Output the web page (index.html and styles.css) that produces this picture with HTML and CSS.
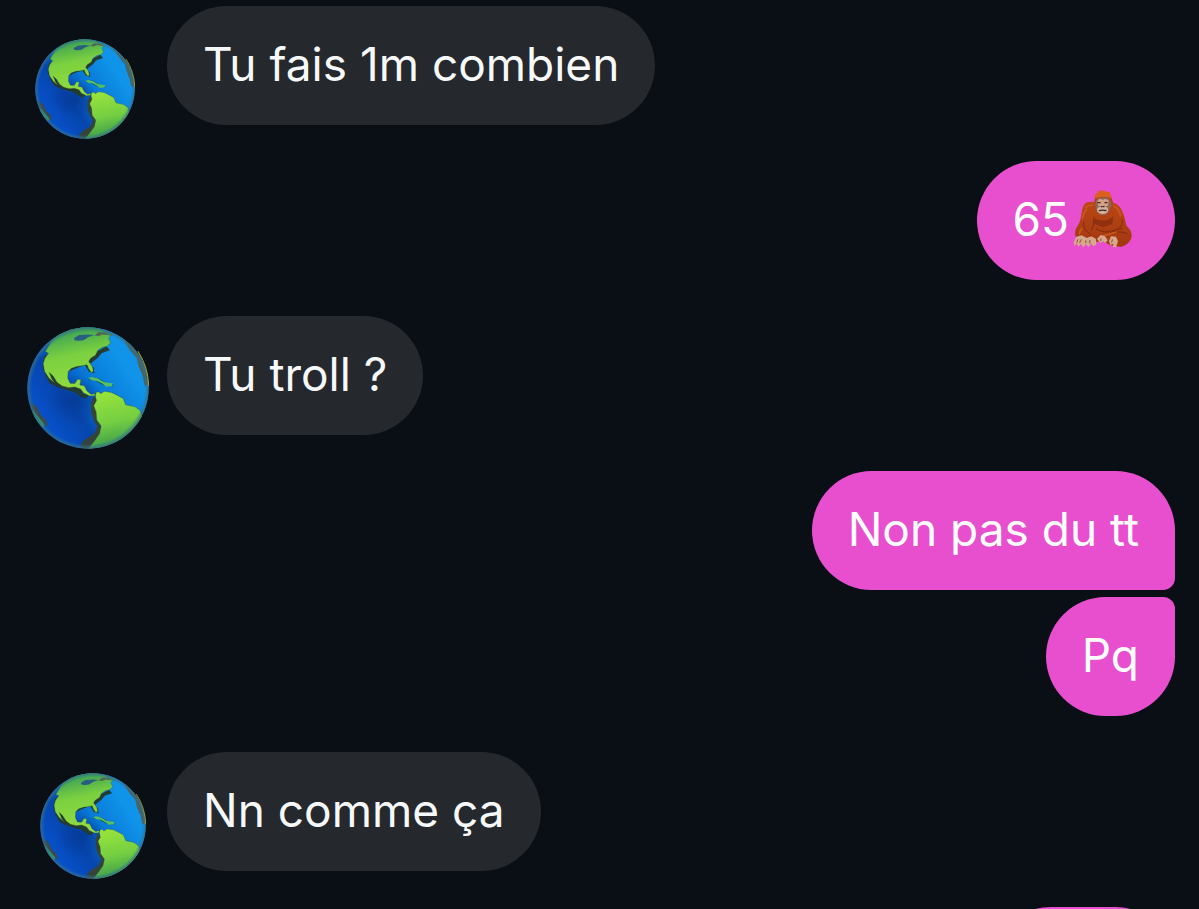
FILE: index.html
```
<!DOCTYPE html>
<html lang="fr">
	<head>
		<title>Messages</title>
		<meta charset="utf-8"/>
		<meta name="viewport" content="width=device-width, initial-scale=1"/>
		<link rel="stylesheet" href="styles.css">
	</head>
	<body>
		<!-- shared drawings -->
		<svg class="defs" width="0" height="0" aria-hidden="true">
			<defs>
				<linearGradient id="sea" x1="0.15" y1="0.75" x2="0.8" y2="0.3">
					<stop offset="0" stop-color="#0750c8"/>
					<stop offset="0.3" stop-color="#0645ac"/>
					<stop offset="0.6" stop-color="#0878d6"/>
					<stop offset="1" stop-color="#1094ea"/>
				</linearGradient>
				<linearGradient id="north" x1="0.6" y1="1" x2="0.4" y2="0">
					<stop offset="0" stop-color="#96df3c"/>
					<stop offset="0.6" stop-color="#7bd040"/>
					<stop offset="1" stop-color="#329b55"/>
				</linearGradient>
				<linearGradient id="south" x1="0.4" y1="0" x2="0.6" y2="1">
					<stop offset="0" stop-color="#97e33b"/>
					<stop offset="0.5" stop-color="#75cf42"/>
					<stop offset="1" stop-color="#2f914c"/>
				</linearGradient>
				<radialGradient id="rim">
					<stop offset="0.92" stop-color="#2d769b" stop-opacity="0"/>
					<stop offset="1" stop-color="#396e7c" stop-opacity="0.9"/>
				</radialGradient>
				<radialGradient id="deep">
					<stop offset="0" stop-color="#053b98"/>
					<stop offset="1" stop-color="#053b98" stop-opacity="0"/>
				</radialGradient>
				<clipPath id="disc"><circle cx="219" cy="220" r="180"/></clipPath>
				<linearGradient id="fur" x1="0" y1="0" x2="0" y2="1">
					<stop offset="0" stop-color="#c04c17"/>
					<stop offset="1" stop-color="#a2370f"/>
				</linearGradient>
			</defs>
			<symbol id="globe" viewBox="38 39 362 362">
				<g clip-path="url(#disc)">
					<rect x="38" y="39" width="362" height="362" fill="url(#sea)"/>
					<ellipse cx="180" cy="255" rx="85" ry="75" fill="url(#deep)"/>
					<path d="M325 78l20 32 18 20 6 25 12 28 6 30 20-5-12-65-35-55z" fill="#4c615a"/>
					<path d="M50 262l18 15 10 22 18 18 2 18-20-8-25-34z" fill="#3c4a49"/>
					<path d="M54 286l18 20 18 22-4 10-28-25z" fill="#2d9870"/>
					<path d="M236 246l-8 18 0 30 10 26 9 14-10 22-20 12-16 12-6 25 60-10 10-140z" fill="#34443d"/>
					<path d="M88 130l-4 28 9 26 13 23 23 11 18 6 30 8 24 16 14 4 4-12-16-4-6-22-40-2-64-92zM160 172l22-10 28-10 12 20 16 4-2-16-10-12 22-18 12-14 24-8-10-12-110 60z" fill="#243b34"/>
					<path d="M92 112L112 78 150 46 200 36 250 43 290 62 280 72 286 86 276 96 262 99 248 108 242 122 227 132 221 141 232 156 235 170 229 174 221 163 216 151 202 154 186 156 169 162 160 172 159 191 166 206 180 207 188 194 198 195 195 211 208 213 216 229 228 239 241 236 238 243 225 244 206 235 197 223 180 217 162 219 142 214 127 203 115 184 104 174 112 194 121 206 104 192 90 171 86 148 91 132 102 117z" fill="url(#north)" stroke="#27402e" stroke-width="1"/>
					<path d="M178 72l15-9 26-2 19 2-18 6-14 9-16 2-11-2z" fill="#2a5d83"/>
					<path d="M238 64l13-10 20 1 22 11-16-3-15-2-12 5z" fill="#516653"/>
					<path d="M219 195l11-7 16 2 19 10 14 7 14 2-2 6-20-1-21-10-15-10z" fill="#173b38"/>
					<path d="M219 190l12-3 16 4 15 9 12 4 19 2-3 9-17 1-12-9-16-8-14-2z" fill="#54bf65"/>
					<path d="M241 243l3-11 8 0 4 5 12-7 20 3 13 6 22 12 8 19 28 6 16 12 5 20-20 42-54 41-62 15-25-6 19-23 15-21 5-23-13-18-2-24-7-18 8-15z" fill="url(#south)" stroke="#27402e" stroke-width="1"/>
					<circle cx="219" cy="220" r="181" fill="url(#rim)"/>
				</g>
				<path d="M367 111q31 47 32 103" fill="none" stroke="#a0a33b" stroke-width="3"/>
			</symbol>
			<symbol id="orangutan" viewBox="40 28 180 180">
				<path d="M82 68C64 75 68 105 60 128 49 146 41 158 50 174L70 190 132 185 150 196 184 202Q210 195 216 172 218 153 201 139C195 113 188 75 161 69L151 43 123 32 108 48 104 66z" fill="url(#fur)"/>
				<path d="M101 109q7 14 28 14t32-14l-3 24-28 10-25-10z" fill="#8f3010"/>
				<path d="M72 128q-2 19 10 27l18 18M102 120q2 20-6 30M110 148q23 14 46 6 18-5 31-8M187 120q5 16-9 26l-44 25M151 160q26-8 52 2" fill="none" stroke="#812b0c" stroke-width="3" stroke-linecap="round"/>
				<path d="M78 84q9-9 20-7M68 116q5-22 13-26M163 80q15 7 20 28M125 171q22-7 44-14M67 147q-8 8-8 16" fill="none" stroke="#cd581f" stroke-width="5" stroke-linecap="round"/>
				<path d="M106 66Q102 40 126 37q27-6 30 25l4 21q-2 22-30 27-24-3-26-24z" fill="#b3431a"/>
				<path d="M110 61q5-10 17-7 17-4 25 8l4 15-9 17q-3 12-17 12-18-1-19-15l-5-15z" fill="#8e6757"/>
				<path d="M114 62q8-8 15-1 9-7 18 2l-2 15-14 4-16-4z" fill="#d5a083"/>
				<ellipse cx="129" cy="91" rx="17" ry="12" fill="#d2b19c"/>
				<path d="M115 69h6m15 0h6M125 81h2m4 0h2M119 93q10-3 20 0" fill="none" stroke="#3a2522" stroke-width="4" stroke-linecap="round"/>
				<path d="M106 56q-5-18 17-19l-12-3q22-3 34 3l9 1-4 5 6 13q-22-9-50 0" fill="#dc601d"/>
				<path d="M42 189l8-18 16-4 15 8 15-5 13 8 1 17-10 5-5-9-8 11-9-8-8 9-6-11-8 9-5-10-6 8zM112 178l11-12 13 4 8 12-7 8-7-5-8 5zM148 184l6-14 15 1 6 14-6 18-9-1 1-10-9 4z" fill="#d8a88d"/>
				<path d="M55 179l-4 10M65 179l-5 11M78 182l1 8M91 181l-1 10M124 176l-1 8M158 179l-2 10" stroke="#875041" stroke-width="3"/>
			</symbol>
		</svg>

		<main class="chat">
			<div class="message received">
				<div class="avatar"><svg class="globe small" role="img"><use href="#globe"/></svg></div>
				<div class="bubble">Tu fais 1m combien</div>
			</div>
			<div class="message sent">
				<div class="bubble">65<svg class="emoji" role="img"><use href="#orangutan"/></svg></div>
			</div>
			<div class="message received">
				<div class="avatar"><svg class="globe large" role="img"><use href="#globe"/></svg></div>
				<div class="bubble">Tu troll ?</div>
			</div>
			<div class="message sent group">
				<div class="bubble">Non pas du tt</div>
				<div class="bubble">Pq</div>
			</div>
			<div class="message received">
				<div class="avatar"><svg class="globe medium" role="img"><use href="#globe"/></svg></div>
				<div class="bubble">Nn comme ça</div>
			</div>
			<div class="message sent">
				<div class="bubble next"></div>
			</div>
		</main>
	</body>
</html>
```

FILE: styles.css
```
* { box-sizing:border-box; }
body {
	margin:0;
	height:100vh;
	overflow:hidden;
	color:#f7f8fa;
	background:#0a0e15;
	font-family:Inter, "Liberation Sans", sans-serif;
	font-size:46px;
	line-height:56px;
}
.defs { position:absolute; }

.chat {
	display:flex;
	flex-direction:column;
	gap:36px;
	height:100%;
	overflow:hidden;
	padding:6px 24px 0 0;
}
.message {
	display:flex;
	flex:none;
}
.received { align-items:flex-end; }
.sent {
	flex-direction:column;
	align-items:flex-end;
	gap:7px;
}

.bubble {
	display:flex;
	align-items:center;
	min-height:119px;
	padding:30px 36px 33px;
	border-radius:60px;
	background:#25282d;
	white-space:nowrap;
}
.sent .bubble {
	color:#fff;
	background:#e84fcf;
}
.group .bubble:first-child { border-bottom-right-radius:12px; }
.group .bubble:last-child { border-top-right-radius:12px; }
.next { width:184px; }

/* the globes hang a little below their bubble */
.avatar {
	display:flex;
	flex:none;
	width:167px;
	margin-bottom:-14px;
}
.globe { flex:none; }
.small {
	width:100px;
	height:100px;
	margin-left:35px;
}
.medium {
	width:106px;
	height:106px;
	margin:0 0 6px 40px;
}
.large {
	width:122px;
	height:122px;
	margin-left:27px;
}
.emoji {
	flex:none;
	width:60px;
	height:60px;
	margin:-4px 6px -4px 4px;
}
```
